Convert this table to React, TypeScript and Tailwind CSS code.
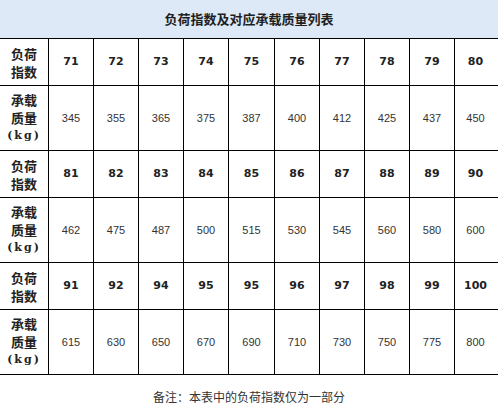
import React from "react";

const cjk = "font-['Noto_Sans_CJK_SC',sans-serif]";

const sections = [
  { index: [71, 72, 73, 74, 75, 76, 77, 78, 79, 80], mass: [345, 355, 365, 375, 387, 400, 412, 425, 437, 450] },
  { index: [81, 82, 83, 84, 85, 86, 87, 88, 89, 90], mass: [462, 475, 487, 500, 515, 530, 545, 560, 580, 600] },
  { index: [91, 92, 94, 95, 95, 96, 97, 98, 99, 100], mass: [615, 630, 650, 670, 690, 710, 730, 750, 775, 800] },
];

const cols = "grid grid-cols-[48px_45px_45px_45px_45px_46px_45px_45px_45px_45px_42px]";

const IndexRow = ({ values }: { values: number[] }) => (
  <div className={`${cols} h-[47px] border-t border-black`}>
    <div className={`${cjk} flex flex-col items-center justify-center pt-[2px] text-[13px] font-bold leading-[18px] text-[#222]`}>
      <span>负荷</span>
      <span>指数</span>
    </div>
    {values.map((v, i) => (
      <div
        key={i}
        className="flex items-center justify-center border-l border-black font-['DejaVu_Sans',sans-serif] text-[11px] font-bold text-[#222]"
      >
        {v}
      </div>
    ))}
  </div>
);

const MassRow = ({ values }: { values: number[] }) => (
  <div className={`${cols} h-[65px] border-t border-black`}>
    <div className={`${cjk} flex flex-col items-center justify-center text-[13px] font-bold leading-[18px] text-[#222]`}>
      <span>承载</span>
      <span>质量</span>
      <span className="font-['DejaVu_Serif',serif] text-[11px] tracking-[2px]">(kg)</span>
    </div>
    {values.map((v, i) => (
      <div
        key={i}
        className="flex items-center justify-center border-l border-black font-['Liberation_Sans',sans-serif] text-[11px] text-[#333]"
      >
        {v}
      </div>
    ))}
  </div>
);

export default function App() {
  return (
    <div className="w-[498px] h-[408px] overflow-hidden bg-white">
      <div className={`${cjk} flex h-[38px] items-center justify-center bg-[#dde9f7] text-[13px] font-bold text-[#1f1f1f]`}>
        负荷指数及对应承载质量列表
      </div>
      <div className="border-b border-black">
        {sections.map((s, i) => (
          <React.Fragment key={i}>
            <IndexRow values={s.index} />
            <MassRow values={s.mass} />
          </React.Fragment>
        ))}
      </div>
      <div className={`${cjk} pt-[14px] text-center text-[12px] leading-[16px] text-[#333]`}>
        备注：本表中的负荷指数仅为一部分
      </div>
    </div>
  );
}
